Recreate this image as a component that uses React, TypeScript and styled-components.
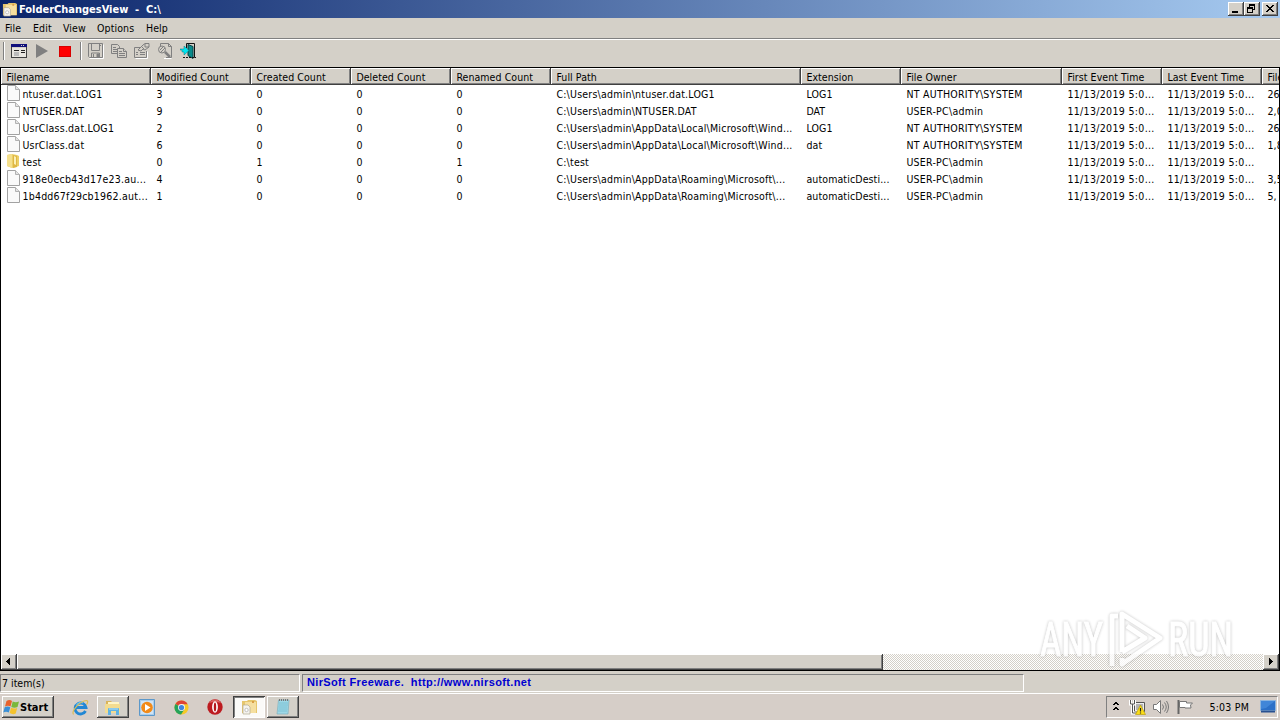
import React from 'react';
import styled, { createGlobalStyle, css } from 'styled-components';

const Global = createGlobalStyle`
  * { box-sizing: border-box; }
  body { margin: 0; overflow: hidden; }
`;

const raised = css`
  background: #d4d0c8;
  box-shadow: inset -1px -1px #404040, inset 1px 1px #fff, inset -2px -2px #808080;
`;

const Screen = styled.div`
  position: relative;
  width: 1280px;
  height: 720px;
  overflow: hidden;
  display: flex;
  flex-direction: column;
  background: #d4d0c8;
  color: #000;
  font: 10.5px/17px 'DejaVu Sans Condensed', 'DejaVu Sans', sans-serif;
  font-stretch: condensed;
  white-space: pre;
`;

const Text = styled.span<{ $gap?: number }>`
  letter-spacing: ${(p) => p.$gap ?? 0}px;
`;

const TitleBar = styled.header`
  height: 18px;
  display: flex;
  align-items: center;
  padding: 0 2px;
  background: linear-gradient(90deg, #0a246a, #a6caf0);
  color: #fff;
  font-weight: bold;
`;
const TitleText = styled.h1`
  flex: 1;
  margin: 0 0 0 2px;
  font-size: 11px;
  letter-spacing: -0.02px;
`;
const CaptionButton = styled.button<{ $apart?: boolean }>`
  ${raised}
  width: 16px;
  height: 14px;
  padding: 0;
  border: 0;
  margin-left: ${(p) => (p.$apart ? 2 : 0)}px;
  svg { display: block; }
`;
const MenuBar = styled.nav`
  height: 21px;
  display: flex;
  padding: 2px 0 0 5px;
  border-bottom: 1px solid #808080;
`;
const MenuItem = styled.div<{ $w: number }>`
  width: ${(p) => p.$w}px;
  letter-spacing: 0.1px;
`;
const ToolBar = styled.div`
  height: 28px;
  display: flex;
  align-items: center;
  border-top: 1px solid #fff;
  padding: 0 0 5px 3px;
`;
const Separator = styled.i`
  width: 2px;
  height: 18px;
  border-left: 1px solid #808080;
  border-right: 1px solid #fff;
`;
const Tool = styled.div`
  width: 23px;
  display: flex;
  justify-content: center;
`;
const ListView = styled.main`
  height: 604px;
  display: flex;
  flex-direction: column;
  border: 1px solid #000;
  background: #fff;
`;
const HeaderRow = styled.div`
  display: flex;
  height: 17px;
  overflow: hidden;
  background: #d4d0c8;
`;
const HeaderCell = styled.div<{ $w: number }>`
  flex: 0 0 ${(p) => p.$w}px;
  padding-left: 5.4px;
  box-shadow: inset -1px -1px #404040, inset 1px 1px #fff, inset -2px -2px #808080;
  line-height: 18px;
`;
const Row = styled.div`
  display: flex;
  height: 17px;
  overflow: hidden;
`;
const Cell = styled.div<{ $w: number; $icon?: boolean }>`
  flex: 0 0 ${(p) => p.$w}px;
  display: flex;
  padding-left: ${(p) => (p.$icon ? 4 : 5.4)}px;
  line-height: 18px;
  svg { flex: none; margin-right: 1.4px; }
`;
const Rows = styled.div`
  flex: 1;
`;
const ScrollBar = styled.div`
  height: 16px;
  display: flex;
  background: repeating-conic-gradient(#d4d0c8 0 25%, #fff 0 50%) 0 0 / 2px 2px;
`;
const ScrollButton = styled.div`
  ${raised}
  width: 16px;
  height: 16px;
`;
const Thumb = styled.div`
  ${raised}
  width: 866px;
  margin-right: auto;
`;
const StatusBar = styled.footer`
  height: 22px;
  display: flex;
  gap: 2px;
  padding: 3px 0 1px;
`;
const Pane = styled.div<{ $w: number }>`
  width: ${(p) => p.$w}px;
  height: 18px;
  border: 1px solid;
  border-color: #808080 #fff #fff #808080;
  padding-left: 1px;
  line-height: 16px;
`;
const NirLink = styled.a`
  display: block;
  margin: -1px 0 0 3px;
  color: #0000d0;
  font-weight: bold;
  font-family: 'Liberation Sans', sans-serif;
  font-size: 11px;
  letter-spacing: 0.35px;
`;
const TaskBar = styled.div`
  height: 27px;
  display: flex;
  align-items: center;
  border-top: 1px solid #fff;
  background: #d6cec8;
  padding: 0 2px;
`;
const StartButton = styled.button`
  ${raised}
  width: 52px;
  height: 22px;
  display: flex;
  align-items: center;
  border: 0;
  padding: 0 0 0 1px;
  margin-right: 9px;
  font: bold 11px 'DejaVu Sans Condensed', 'DejaVu Sans', sans-serif;
  font-stretch: condensed;
  letter-spacing: 0;
`;
const Task = styled.div<{ $kind?: 'open' | 'active'; $w?: number }>`
  width: ${(p) => p.$w ?? 34}px;
  height: 22px;
  display: flex;
  align-items: center;
  justify-content: center;
  ${(p) => p.$kind === 'open' && raised}
  ${(p) =>
    p.$kind === 'active' &&
    css`
      background: #fbfaf8;
      box-shadow: inset 1px 1px #404040, inset -1px -1px #fff, inset 2px 2px #808080;
    `}
`;
const Gap = styled.i<{ $w: number }>`
  width: ${(p) => p.$w}px;
`;
const Tray = styled.div`
  width: 172px;
  height: 22px;
  margin-left: auto;
  display: flex;
  align-items: center;
  border: 1px solid;
  border-color: #808080 #fff #fff #808080;
  padding: 0 1px 0 5px;
  svg { flex: none; }
`;
const Clock = styled.time`
  margin: 0 11px 0 16px;
  width: 40px;
  letter-spacing: 0.2px;
`;
const Watermark = styled.div`
  position: absolute;
  left: 1038px;
  top: 606px;
  width: 200px;
  height: 68px;
  opacity: 0.8;
  svg { display: block; filter: drop-shadow(0 0 1.5px rgba(0, 0, 0, 0.3)); }
`;

type Px = [string, string];
/* Small pixel drawing: each pair is a colour and a path of filled rectangles. */
const Glyph = ({ w, h, art }: { w: number; h: number; art: Px[] }) => (
  <svg width={w} height={h} viewBox={`0 0 ${w} ${h}`} shapeRendering="crispEdges">
    {art.map(([c, d], i) => (
      <path key={i} fill={c} d={d} />
    ))}
  </svg>
);

const FileIcon = () => (
  <svg width="16" height="17" viewBox="0 0 16 17">
    <path d="M2.500.500h8l4 4v11h-12z" fill="#fafafa" stroke="#a2a2a2" />
    <path d="M10.500.500v4h4" fill="#e4e4e4" stroke="#b2b2b2" />
  </svg>
);
const FolderIcon = () => (
  <svg width="16" height="17" viewBox="0 0 16 17">
    <path d="M2 2l5-1 5 1 2 1v10l-3 1-4 1-5-2z" fill="#eccf66" />
    <path d="M2 2l5-1v14l-5-2z" fill="#f5e08c" />
    <path d="M8 2l4 1v11l-4 1z" fill="#dfb743" />
    <path d="M9 3l2 1v8l-2-1z" fill="#fbf0b5" />
  </svg>
);
const AppIcon = ({ s = 16 }: { s?: number }) => (
  <svg width={s} height={s} viewBox="0 0 16 16">
    <path d="M1 2h5l1-1h7l2 1v12H1z" fill="#e6c66d" />
    <path d="M4 3h11v11H4z" fill="#f5dfa0" />
    <path d="M2 6h5l2 2v7H2z" fill="#f5f3ee" stroke="#b3a98f" strokeWidth=".7" />
    <circle cx="5.500" cy="11" r="1.700" fill="#fff" stroke="#b4b4b4" strokeWidth=".8" />
    <path d="M11 2h2v2h-2z" fill="#d99d46" />
  </svg>
);

const SaveIcon = () => (
  <svg width="16" height="16" viewBox="0 0 16 16" fill="none" stroke="#808080">
    <path d="M1.500 15.500h14v-14" stroke="#fff" />
    <path d="M.500.500h14v14h-13l-1-1z" />
    <path d="M3.500.500v7h8v-7M3.500 14v-4h8v4M5.500 11v3" />
    <path d="M9 11h2v3H9zM12.500 2v1" fill="#808080" />
  </svg>
);
const CopyIcon = () => (
  <svg width="16" height="16" viewBox="0 0 16 16" fill="#d4d0c8" stroke="#808080">
    <path d="M.500 1.500h6l2 2v7h-8z" />
    <path d="M2 4.500h3M2 6.500h4M2 8.500h4" />
    <path d="M6.500 5.500h6l3 3v6h-9z" />
    <path d="M12.500 5.500v3h3M8 8.500h3M8 10.500h6M8 12.500h6" />
  </svg>
);
const PropsIcon = () => (
  <svg width="16" height="16" viewBox="0 0 16 16" fill="none" stroke="#808080">
    <path d="M1.500 15.500h12v-7" stroke="#fff" />
    <path d="M6 4.500H.500v10h12V8" />
    <path d="M2 9.500h2M6 9.500h5M2 11.500h2M6 11.500h5" />
    <path d="M4 7l5-5 2-1.500h4V4l-4 3-2-1-2 2z" fill="#d4d0c8" />
    <path d="M11 1v3h4M8 4l2 2" />
  </svg>
);
const FindIcon = () => (
  <svg width="16" height="16" viewBox="0 0 16 16" fill="none" stroke="#808080">
    <path d="M3.500 3V.500h8l3 3v11H9" />
    <path d="M11.500.500v3h3" />
    <path d="M14.500 15.500H7" stroke="#fff" />
    <circle cx="5" cy="6.500" r="3.500" fill="#d4d0c8" />
    <path d="M3 7l3-3M4 9l4-4" />
    <path d="M8 9l5 5" strokeWidth="2.500" />
  </svg>
);
const ExitIcon = () => (
  <svg width="16" height="16" viewBox="0 0 16 16">
    <path d="M6.500 5V.500h8v14H12" fill="none" stroke="#111" />
    <path d="M8 1.500l5 2v12l-5-3z" fill="#078b8b" stroke="#073e42" />
    <path d="M0 6h4V3l5 4.500L4 12V9H2V7H0z" fill="#00e5ef" stroke="#087a83" strokeWidth=".5" />
    <path d="M3 14.500h13" stroke="#111" strokeDasharray="2 1" />
  </svg>
);

const StartFlag = () => (
  <svg width="17" height="17" viewBox="0 0 17 17">
    <path d="M3.500 2q3-2 5.500 0L7.500 7.500Q5 6 2 7.500z" fill="#e8622c" />
    <path d="M9.700 2.500q3 1.500 6.300 0L14.500 8q-3 1.500-6.200 0z" fill="#7ab83a" />
    <path d="M1.700 8.300q3-1.500 5.600 0L5.800 13.500Q3 12 .3 13.500z" fill="#3a8fd6" />
    <path d="M8 8.800q3 1.500 6.200.200L12.700 14.500q-3 1.500-6-.5z" fill="#f4c22d" />
  </svg>
);
const IeIcon = () => (
  <svg width="17" height="17" viewBox="0 0 17 17" fill="none">
    <path d="M13.500 12A5.500 5.500 0 1 1 14 8.500H4.500" stroke="#2187d4" strokeWidth="2.800" />
    <path d="M4.500 6.500A4.500 4.500 0 0 1 11 4" stroke="#6cc6f4" strokeWidth="1.200" />
    <path d="M1.500 15.500C-1 12 8 2 14.500 1.500c2 0 1 3 0 4" stroke="#d9bd55" strokeWidth="1.200" />
  </svg>
);
const ExplorerIcon = () => (
  <svg width="18" height="17" viewBox="0 0 18 17">
    <path d="M2 2h5l1 1h7v4H2z" fill="#d9b45a" />
    <path d="M4 3h11v4H4z" fill="#fff5c6" />
    <path d="M1 5h15v9H1z" fill="#f3dc90" />
    <path d="M4 16V10q0-1 1-1h9q1 0 1 1v6h-3v-4H7v4z" fill="#5fb2e2" />
    <path d="M5 10h9" stroke="#b9e4fa" />
  </svg>
);
const MediaIcon = () => (
  <svg width="16" height="17" viewBox="0 0 16 17">
    <path d="M.500.500h15v16H.500z" fill="#a9cdec" stroke="#5c98ca" />
    <path d="M2 2h12v13H2z" fill="#d0e4f5" />
    <circle cx="8" cy="8.500" r="5.800" fill="#f28a18" />
    <path d="M6 5l5.500 3.500L6 12z" fill="#fff" />
  </svg>
);
const ChromeIcon = () => (
  <svg width="15" height="15" viewBox="0 0 16 16">
    <circle cx="8" cy="8" r="7.500" fill="#f6c927" />
    <path d="M8 8L1.500 4.200A7.500 7.500 0 0 1 14.500 4.500H8z" fill="#df4335" />
    <path d="M8 8L1.500 4.200A7.500 7.500 0 0 0 7.500 15.500L11 10z" fill="#25a35a" />
    <circle cx="8" cy="8" r="3.700" fill="#f5f5f5" />
    <circle cx="8" cy="8" r="2.800" fill="#4285dc" />
  </svg>
);
const OperaIcon = () => (
  <svg width="16" height="16" viewBox="0 0 16 16">
    <circle cx="8" cy="8" r="7.700" fill="#bd1b20" />
    <path d="M2 4a7 7 0 0 1 12 0q-6-2-12 0z" fill="#d9605e" />
    <ellipse cx="8" cy="8" rx="2.900" ry="5.800" fill="#fff" />
    <ellipse cx="8" cy="8" rx="1.200" ry="4.600" fill="#b5171b" />
  </svg>
);
const NotepadIcon = () => (
  <svg width="16" height="18" viewBox="0 0 16 18">
    <path d="M3.500 2h10.500l-1 14H2z" fill="#9ed8e6" stroke="#7fb0bd" strokeWidth=".7" />
    <path d="M4 5h9M4 7h9M3.500 9h9M3.500 11h9M3 13h9" stroke="#74bccf" strokeWidth=".8" />
    <path d="M4 2h10" stroke="#777" strokeWidth="2" strokeDasharray="1 1" />
  </svg>
);

const NetworkIcon = () => (
  <svg width="17" height="17" viewBox="0 0 17 17">
    <path d="M5.500 3.500h10v9h-10z" fill="#eee" stroke="#555" />
    <path d="M7 5h7v6H7z" fill="#b4b4b4" />
    <path d="M1.500 1v4h4V1M3.500 5v9H8" fill="none" stroke="#fff" strokeWidth="3" />
    <path d="M1.500 1v4h4V1M3.500 5v9H8" fill="none" stroke="#555" />
    <path d="M11.500 6l5 9.500h-10z" fill="#fbdd18" stroke="#b69700" strokeWidth=".6" />
    <path d="M11.500 9v3.500M11.500 13.500v1" stroke="#222" strokeWidth="1.200" />
  </svg>
);
const SpeakerIcon = () => (
  <svg width="17" height="16" viewBox="0 0 17 16" fill="none" stroke="#777">
    <path d="M.500 5.500h3l4-4v13l-4-4h-3z" fill="#fff" />
    <path d="M9.500 5.500q2 2.500 0 5M11.500 3.500q3.500 4.500 0 9M13.500 2q4 6 0 12" />
  </svg>
);
const FlagIcon = () => (
  <svg width="17" height="16" viewBox="0 0 17 16">
    <path d="M1.500 1v14" stroke="#666" strokeWidth="2" />
    <path d="M2.500 2.500h7v1.500h6l-2 2 .5 3h-6V8.500h-5.500z" fill="#fff" stroke="#777" />
  </svg>
);
const DesktopIcon = () => (
  <svg width="16" height="14" viewBox="0 0 16 14">
    <path d="M.500.500h15v10H.500z" fill="#2b70c8" stroke="#8cb5df" />
    <path d="M1 1h14L6 8 1 9z" fill="#4086d8" />
    <path d="M1 10.500h14v2H1z" fill="#285090" />
  </svg>
);

/* Column title, width, and letter spacing of its values. */
const columns: [string, number, number][] = [
  ['Filename', 150, 0.24],
  ['Modified Count', 100, 0],
  ['Created Count', 100, 0],
  ['Deleted Count', 100, 0],
  ['Renamed Count', 100, 0],
  ['Full Path', 250, 0.22],
  ['Extension', 100, 0.12],
  ['File Owner', 161, 0.26],
  ['First Event Time', 100, 0.33],
  ['Last Event Time', 100, 0.33],
  ['File Size', 100, 0.2],
];
const t = '11/13/2019 5:0...';
const sys = 'NT AUTHORITY\\SYSTEM';
const adm = 'USER-PC\\admin';
const home = 'C:\\Users\\admin\\';
const files = [
  ['ntuser.dat.LOG1', '3', '0', '0', '0', home + 'ntuser.dat.LOG1', 'LOG1', sys, t, t, '26'],
  ['NTUSER.DAT', '9', '0', '0', '0', home + 'NTUSER.DAT', 'DAT', adm, t, t, '2,0'],
  ['UsrClass.dat.LOG1', '2', '0', '0', '0', home + 'AppData\\Local\\Microsoft\\Wind...', 'LOG1', sys, t, t, '26'],
  ['UsrClass.dat', '6', '0', '0', '0', home + 'AppData\\Local\\Microsoft\\Wind...', 'dat', sys, t, t, '1,8'],
  ['test', '0', '1', '0', '1', 'C:\\test', '', adm, t, t, ''],
  ['918e0ecb43d17e23.au...', '4', '0', '0', '0', home + 'AppData\\Roaming\\Microsoft\\...', 'automaticDesti...', adm, t, t, '3,5'],
  ['1b4dd67f29cb1962.aut...', '1', '0', '0', '0', home + 'AppData\\Roaming\\Microsoft\\...', 'automaticDesti...', adm, t, t, '5,'],
];
const menus: [string, number][] = [['File', 28], ['Edit', 30], ['View', 34], ['Options', 49], ['Help', 40]];

const playMark = 'M74 60V10h6M84 46V8l38 24-38 26V52M84 46l23-14-18-12';

export default function App() {
  return (
    <Screen>
      <Global />
      <TitleBar>
        <AppIcon s={15} />
        <TitleText>FolderChangesView  -  C:\</TitleText>
        <CaptionButton><Glyph w={16} h={14} art={[['#000', 'M4 9h6v2h-6z']]} /></CaptionButton>
        <CaptionButton>
          <Glyph w={16} h={14} art={[['#000', 'M5 2h6v6h-2v-1h1v-3h-4v1h-1zM3 5h6v6h-6zM4 7v3h4v-3z']]} />
        </CaptionButton>
        <CaptionButton $apart>
          <Glyph w={16} h={14} art={[['#000', 'M4 3h2v1h1v1h2v-1h1v-1h2v1h-1v1h-1v1h-1v1h1v1h1v1h1v1h-2v-1h-1v-1h-2v1h-1v1h-2v-1h1v-1h1v-1h1v-1h-1v-1h-1v-1h-1z']]} />
        </CaptionButton>
      </TitleBar>
      <MenuBar>
        {menus.map(([m, w]) => <MenuItem key={m} $w={w}>{m}</MenuItem>)}
      </MenuBar>
      <ToolBar>
        <Separator />
        <Gap $w={2} />
        <Tool>
          <Glyph w={16} h={14} art={[['#404040', 'M0 0h16v14H0z'], ['#e8e6e0', 'M1 4h14v9H1z'], ['#10107c', 'M0 0h16v3H0z'], ['#d4d0c8', 'M1 3h14v1H1zM10 1h1v1h-1zM12 1h1v1h-1z'], ['#222', 'M3 6h5v1H3zM10 6h4v1h-4zM10 8h4v1h-4z'], ['#bbb', 'M3 8h5v4H3z']]} />
        </Tool>
        <Tool><svg width="12" height="14" viewBox="0 0 12 14"><path d="M0 0l12 7-12 7z" fill="#808080" /></svg></Tool>
        <Tool><Glyph w={12} h={11} art={[['#d80000', 'M0 0h12v11H0z'], ['#f00', 'M1 1h10v9H1z']]} /></Tool>
        <Gap $w={4} />
        <Separator />
        <Gap $w={2} />
        <Tool><SaveIcon /></Tool>
        <Tool><CopyIcon /></Tool>
        <Tool><PropsIcon /></Tool>
        <Tool><FindIcon /></Tool>
        <Tool><ExitIcon /></Tool>
      </ToolBar>
      <ListView>
        <HeaderRow>
          {columns.map(([name, w]) => <HeaderCell key={name} $w={w}><Text $gap={0.07}>{name}</Text></HeaderCell>)}
        </HeaderRow>
        <Rows>
          {files.map((f) => (
            <Row key={f[0]}>
              {f.map((v, i) => (
                <Cell key={i} $w={columns[i][1]} $icon={i === 0}>
                  {i === 0 && (v === 'test' ? <FolderIcon /> : <FileIcon />)}
                  <Text $gap={columns[i][2]}>{v}</Text>
                </Cell>
              ))}
            </Row>
          ))}
        </Rows>
        <ScrollBar>
          <ScrollButton><Glyph w={16} h={16} art={[['#000', 'M9 4v7h-1v-1h-1v-1h-1v-1h-1v-1h1v-1h1v-1h1v-1z']]} /></ScrollButton>
          <Thumb />
          <ScrollButton><Glyph w={16} h={16} art={[['#000', 'M6 4h1v1h1v1h1v1h1v1h-1v1h-1v1h-1v1h-1z']]} /></ScrollButton>
        </ScrollBar>
      </ListView>
      <StatusBar>
        <Pane $w={300}>7 item(s)</Pane>
        <Pane $w={722}><NirLink>NirSoft Freeware.  http://www.nirsoft.net</NirLink></Pane>
      </StatusBar>
      <TaskBar>
        <StartButton><StartFlag />Start</StartButton>
        <Task><IeIcon /></Task>
        <Task $kind="open" $w={32}><ExplorerIcon /></Task>
        <Gap $w={1} />
        <Task><MediaIcon /></Task>
        <Task><ChromeIcon /></Task>
        <Task><OperaIcon /></Task>
        <Gap $w={1} />
        <Task $kind="active" $w={32}><AppIcon /></Task>
        <Gap $w={2} />
        <Task $kind="open" $w={32}><NotepadIcon /></Task>
        <Tray>
          <Glyph w={8} h={12} art={[['#000', 'M3 1h2v1h1v1h1v1h-2v-1h-2v1h-2v-1h1v-1h1zM3 6h2v1h1v1h1v1h-2v-1h-2v1h-2v-1h1v-1h1z']]} />
          <Gap $w={9} />
          <NetworkIcon />
          <Gap $w={7} />
          <SpeakerIcon />
          <Gap $w={7} />
          <FlagIcon />
          <Clock>5:03 PM</Clock>
          <DesktopIcon />
        </Tray>
      </TaskBar>
      <Watermark>
        <svg width="200" height="68" viewBox="0 0 200 68">
          <g fill="#fff" stroke="#fff" strokeWidth="1" fontFamily="Roboto, sans-serif" fontSize="48">
            <text x="2" y="50" textLength="63" lengthAdjust="spacingAndGlyphs">ANY</text>
            <text x="130" y="50" textLength="65" lengthAdjust="spacingAndGlyphs">RUN</text>
          </g>
          <path d={playMark} fill="none" strokeLinejoin="round" stroke="#fff" strokeWidth="5" />
        </svg>
      </Watermark>
    </Screen>
  );
}
